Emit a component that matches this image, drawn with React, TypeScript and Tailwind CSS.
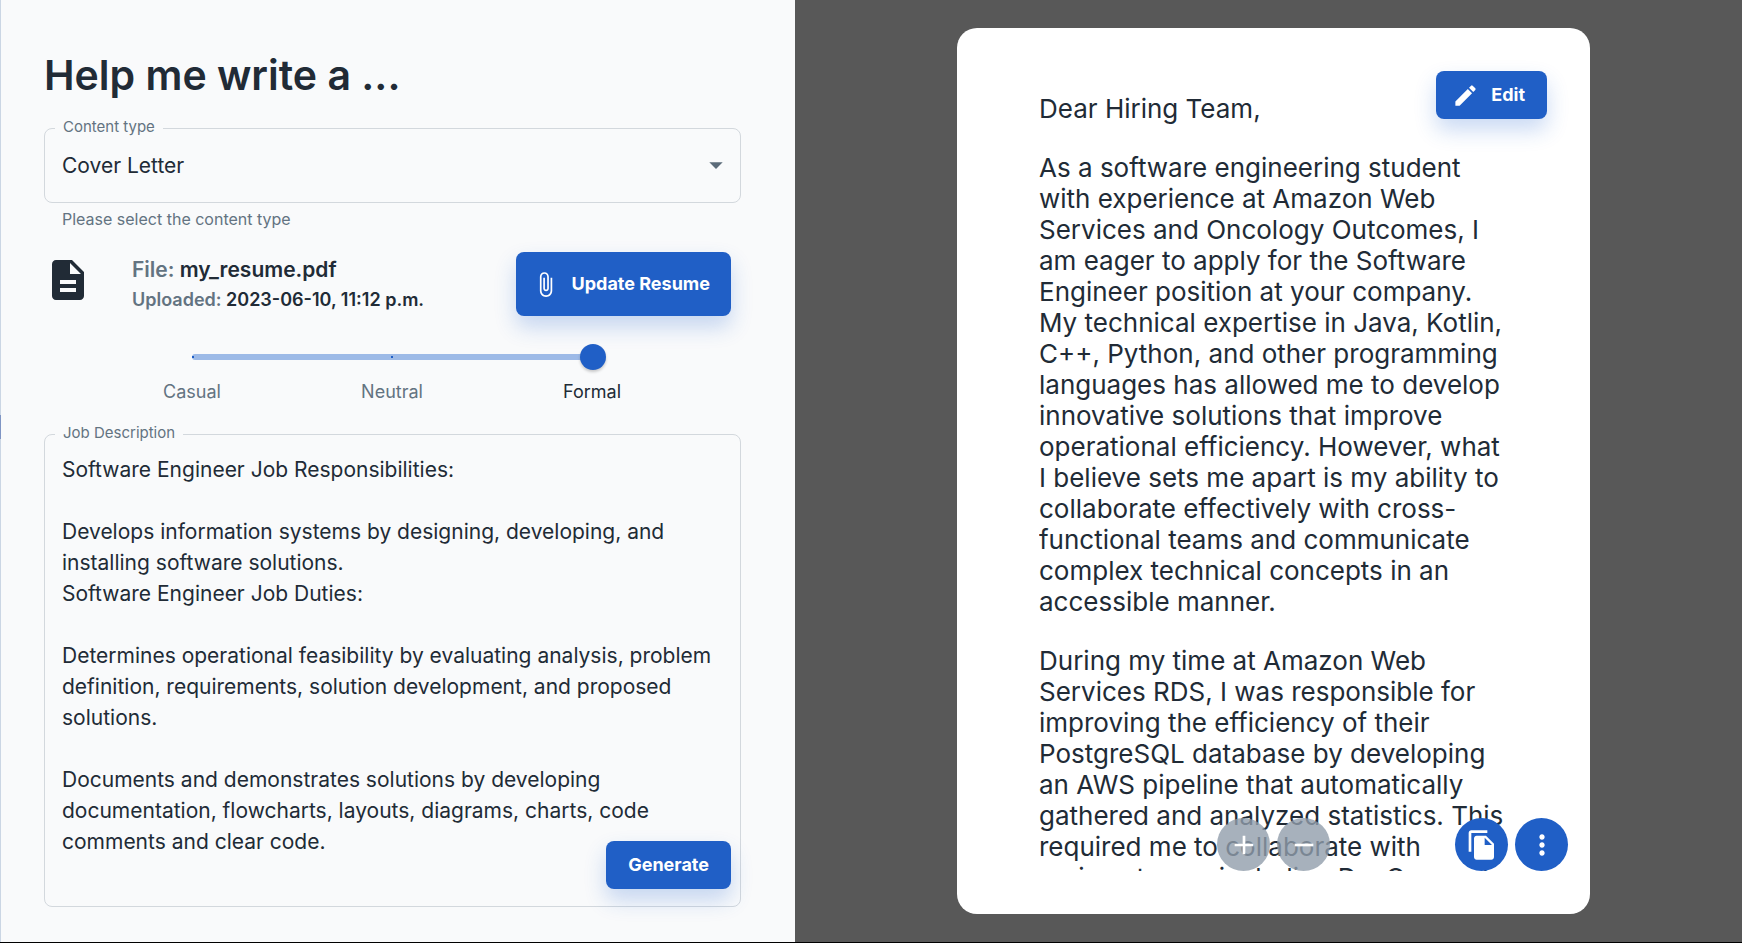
import { useState } from "react";

const jobDescription = `Software Engineer Job Responsibilities:

Develops information systems by designing, developing, and installing software solutions.
Software Engineer Job Duties:

Determines operational feasibility by evaluating analysis, problem definition, requirements, solution development, and proposed solutions.

Documents and demonstrates solutions by developing documentation, flowcharts, layouts, diagrams, charts, code comments and clear code.`;

const letter = [
  "Dear Hiring Team,",
  "As a software engineering student with experience at Amazon Web Services and Oncology Outcomes, I am eager to apply for the Software Engineer position at your company. My technical expertise in Java, Kotlin, C++, Python, and other programming languages has allowed me to develop innovative solutions that improve operational efficiency. However, what I believe sets me apart is my ability to collaborate effectively with cross-functional teams and communicate complex technical concepts in an accessible manner.",
  "During my time at Amazon Web Services RDS, I was responsible for improving the efficiency of their PostgreSQL database by developing an AWS pipeline that automatically gathered and analyzed statistics. This required me to collaborate with various teams including DevOps and",
];

const tones = ["Casual", "Neutral", "Formal"];

const primary =
  "cursor-pointer rounded-lg bg-[#205fc6] font-bold text-white shadow-[0_11px_21px_0_rgba(32,101,209,0.24)] hover:bg-[#103996]";

function Icon({ d, className }: { d: string; className: string }) {
  return (
    <svg viewBox="0 0 24 24" fill="currentColor" aria-hidden="true" className={className}>
      <path d={d} />
    </svg>
  );
}

const icons = {
  description:
    "M14 2H6c-1.1 0-1.99.9-1.99 2L4 20c0 1.1.89 2 1.99 2H18c1.1 0 2-.9 2-2V8l-6-6zm2 16H8v-2h8v2zm0-4H8v-2h8v2zm-3-5V3.5L18.500 9H13z",
  attach:
    "M16.5 6v11.500c0 2.210-1.790 4-4 4s-4-1.790-4-4V5c0-1.380 1.120-2.500 2.500-2.500s2.500 1.120 2.500 2.500v10.500c0 .55-.45 1-1 1s-1-.45-1-1V6H10v9.500c0 1.380 1.120 2.500 2.500 2.500s2.500-1.120 2.500-2.500V5c0-2.210-1.790-4-4-4S7 2.790 7 5v12.500c0 3.040 2.460 5.500 5.500 5.500s5.500-2.460 5.500-5.500V6h-1.500z",
  edit: "M3 17.250V21h3.750L17.810 9.940l-3.750-3.750L3 17.250zM20.710 7.040c.39-.39.39-1.020 0-1.410l-2.340-2.340a.9959.9959 0 0 0-1.410 0l-1.830 1.830 3.750 3.750 1.830-1.830z",
  add: "M19 13h-6v6h-2v-6H5v-2h6V5h2v6h6v2z",
  remove: "M19 13H5v-2h14v2z",
  copy: "M16 1H4c-1.100 0-2 .9-2 2v14h2V3h12V1zm-1 4l6 6v10c0 1.100-.9 2-2 2H7.990C6.890 23 6 22.100 6 21l.01-14c0-1.100.89-2 1.990-2h7zm-1 7h5.500L14 6.500V12z",
  more: "M12 8c1.100 0 2-.9 2-2s-.9-2-2-2-2 .9-2 2 .9 2 2 2zm0 2c-1.100 0-2 .9-2 2s.9 2 2 2 2-.9 2-2-.9-2-2-2zm0 6c-1.100 0-2 .9-2 2s.9 2 2 2 2-.9 2-2-.9-2-2-2z",
  drop: "M7 10l5 5 5-5z",
};

function GeneratorForm() {
  const [text, setText] = useState(jobDescription);
  const [tone, setTone] = useState(2);
  return (
    <form
      onSubmit={(e) => e.preventDefault()}
      className="relative flex w-[795px] shrink flex-col border-l border-[#cbd6e4] bg-[#f9fafb] pt-12 pr-[54px] pb-[35px] pl-[43px]"
    >
      <span className="absolute top-[415px] -left-px h-6 w-px bg-[#7f95c4]" />
      <h1 className="text-[41px] leading-[54px] font-semibold">Help me write a ...</h1>

      <div className="relative mt-[26px]">
        <label htmlFor="content-type" className="absolute -top-[11px] left-[11px] bg-[#f9fafb] px-2 text-[15px] leading-5 text-[#637381]">
          Content type
        </label>
        <select
          id="content-type"
          className="h-[75px] w-full appearance-none rounded-lg border border-[#d3d8dd] bg-transparent pr-12 pl-[17px] text-[21px]"
        >
          <option>Cover Letter</option>
        </select>
        <Icon d={icons.drop} className="pointer-events-none absolute top-[21px] right-[9px] size-8 text-[#5b6b79]" />
      </div>
      <p className="mt-1.5 pl-[18px] text-base leading-5 text-[#637381]">Please select the content type</p>

      <div className="mt-[23px] flex items-center pr-2.5">
        <Icon d={icons.description} className="mb-2 size-12" />
        <div className="ml-10 flex-1 font-semibold">
          <p className="text-[21px] leading-8">
            <span className="text-[#637381]">File:</span> my_resume.pdf
          </p>
          <p className="text-lg leading-7">
            <span className="text-[#637381]">Uploaded:</span> 2023-06-10, 11:12 p.m.
          </p>
        </div>
        <button type="button" className={`${primary} flex h-16 items-center gap-[13px] pr-[21px] pl-4 text-lg leading-6`}>
          <Icon d={icons.attach} className="size-[27px]" />
          Update Resume
        </button>
      </div>

      <div className="mt-6 ml-[134px] w-[428px]">
        <div className="grid items-center">
          <div className="col-start-1 row-start-1 mx-3.5 flex h-1.5 items-center justify-between rounded-full bg-[#9dbae7]">
            <span className="size-0.5 bg-[#205fc6]" />
            <span className="size-0.5 bg-[#205fc6]" />
            <span className="size-0.5" />
          </div>
          <input
            type="range"
            aria-label="Tone"
            min={0}
            max={2}
            value={tone}
            onChange={(e) => setTone(Number(e.target.value))}
            className="col-start-1 row-start-1 h-[34px] w-full cursor-pointer appearance-none bg-transparent [&::-webkit-slider-thumb]:size-[26px] [&::-webkit-slider-thumb]:appearance-none [&::-webkit-slider-thumb]:rounded-full [&::-webkit-slider-thumb]:bg-[#205fc6] [&::-webkit-slider-thumb]:shadow-[0_2px_3px_rgba(0,0,0,0.2)]"
          />
        </div>
        <div className="-mx-[86px] mt-1.5 grid grid-cols-3 text-center text-lg leading-6 text-[#637381]">
          {tones.map((name, i) => (
            <span key={name} className={i === tone ? "text-[#212b36]" : ""}>
              {name}
            </span>
          ))}
        </div>
      </div>

      <div className="relative mt-[30px] flex flex-1 flex-col">
        <label htmlFor="job-description" className="absolute -top-[11px] left-[11px] bg-[#f9fafb] px-2 text-[15px] leading-5 text-[#637381]">
          Job Description
        </label>
        <textarea
          id="job-description"
          value={text}
          onChange={(e) => setText(e.target.value)}
          className="w-full flex-1 resize-none overflow-hidden rounded-lg border border-[#d3d8dd] bg-transparent px-[17px] pt-[19px] text-[21px] leading-[31px]"
        />
        <button type="submit" className={`${primary} absolute right-2.5 bottom-[18px] h-12 px-[22px] text-lg`}>
          Generate
        </button>
      </div>
    </form>
  );
}

const round = "flex size-[53px] cursor-pointer items-center justify-center rounded-full text-white";

function Preview() {
  return (
    <section className="flex flex-1 justify-center bg-[#585858] pt-7 pr-[152px] pb-7 pl-[162px]">
      <div className="relative flex min-w-0 flex-1 flex-col rounded-[20px] bg-white pt-[65px] pr-[76px] pb-[43px] pl-[82px]">
        <article className="min-h-0 flex-1 space-y-7 overflow-hidden text-[26px] leading-[31px]">
          {letter.map((p) => (
            <p key={p}>{p}</p>
          ))}
        </article>
        <button type="button" className={`${primary} absolute top-[43px] right-[43px] flex h-12 items-center gap-3 pr-[22px] pl-4 text-lg`}>
          <Icon d={icons.edit} className="size-[27px]" />
          Edit
        </button>
        <div className="absolute right-[260px] bottom-[43px] flex gap-[7px]">
          <button type="button" aria-label="Zoom in" className={`${round} bg-[#919eab]/80`}>
            <Icon d={icons.add} className="size-8" />
          </button>
          <button type="button" aria-label="Zoom out" className={`${round} bg-[#919eab]/80`}>
            <Icon d={icons.remove} className="size-8" />
          </button>
        </div>
        <div className="absolute right-[22px] bottom-[43px] flex gap-[7px]">
          <button type="button" aria-label="Copy" className={`${round} bg-[#205fc6]`}>
            <Icon d={icons.copy} className="size-8" />
          </button>
          <button type="button" aria-label="More options" className={`${round} bg-[#205fc6]`}>
            <Icon d={icons.more} className="size-8" />
          </button>
        </div>
      </div>
    </section>
  );
}

export default function App() {
  return (
    <main className="flex h-screen overflow-hidden border-b border-black bg-[#585858] font-['Inter','Public_Sans',sans-serif] text-[#212b36]">
      <GeneratorForm />
      <Preview />
    </main>
  );
}
